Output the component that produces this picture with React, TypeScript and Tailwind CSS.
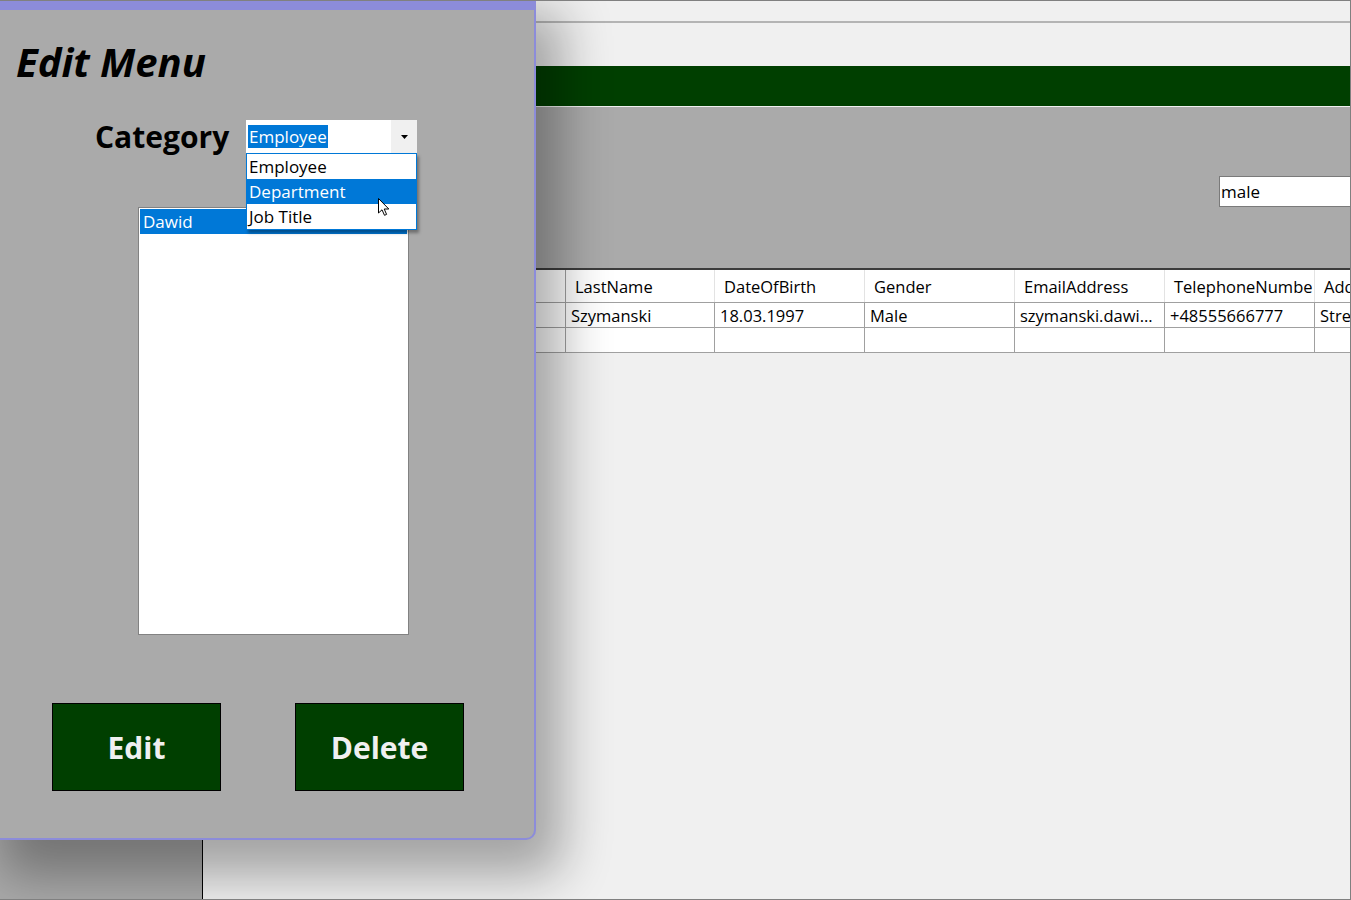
import React from 'react'

const columns = [
  { name: 'LastName', value: 'Szymanski', w: 'w-[149px]' },
  { name: 'DateOfBirth', value: '18.03.1997', w: 'w-[150px]' },
  { name: 'Gender', value: 'Male', w: 'w-[150px]' },
  { name: 'EmailAddress', value: 'szymanski.dawi...', w: 'w-[150px]' },
  { name: 'TelephoneNumbe', value: '+48555666777', w: 'w-[150px]' },
  { name: 'Address', value: 'Street 12', w: 'w-[150px]' },
]

const options = ['Employee', 'Department', 'Job Title']

function Cursor() {
  return (
    <svg width="13" height="20" viewBox="0 0 13 20" className="absolute left-[130px] top-[43px]">
      <path d="M1.5 1.5 L1.5 16 L5 12.8 L7.5 18.3 L9.6 17.4 L7.2 12 L11.8 12 Z" fill="#fff" stroke="#000" strokeWidth="1" strokeLinejoin="miter" />
    </svg>
  )
}

function DataGrid() {
  return (
    <div className="flex flex-col text-[16.5px] text-black">
      <div className="flex h-[33px] bg-white border-b border-[#a0a0a0]">
        <div className="w-[213px] shrink-0 border-r border-[#a0a0a0]" />
        <div className="w-[150px] shrink-0 border-r border-[#a0a0a0] pl-[9px] flex items-center pt-[3px]">FirstName</div>
        {columns.map((c) => (
          <div key={c.name} className={`${c.w} shrink-0 border-r border-[#e3e3e3] pl-[9px] flex items-center pt-[3px] whitespace-nowrap`}>
            {c.name}
          </div>
        ))}
      </div>
      <div className="flex h-[25px] bg-white border-b border-[#a0a0a0]">
        <div className="w-[213px] shrink-0 border-r border-[#a0a0a0] bg-[#f0f0f0]" />
        <div className="w-[150px] shrink-0 border-r border-[#a0a0a0] pl-[5px] flex items-center pt-[2px]">Dawid</div>
        {columns.map((c) => (
          <div key={c.name} className={`${c.w} shrink-0 border-r border-[#a0a0a0] pl-[5px] flex items-center pt-[2px] whitespace-nowrap overflow-hidden`}>
            {c.value}
          </div>
        ))}
      </div>
      <div className="flex h-[25px] bg-white border-b border-[#a0a0a0]">
        <div className="w-[213px] shrink-0 border-r border-[#a0a0a0] bg-[#f0f0f0]" />
        <div className="w-[150px] shrink-0 border-r border-[#a0a0a0]" />
        {columns.map((c) => (
          <div key={c.name} className={`${c.w} shrink-0 border-r border-[#a0a0a0]`} />
        ))}
      </div>
    </div>
  )
}

function EditMenu() {
  return (
    <div className="absolute left-0 top-0 w-[536px] h-[839px] bg-[#aaaaaa] border-t-[9px] border-r-2 border-b-2 border-[#8c8cda] rounded-br-[10px] shadow-[14px_24px_50px_12px_rgba(0,0,0,0.32)] flex flex-col">
      <h1 className="ml-[16px] mt-[28px] text-[40px] leading-[48px] font-bold italic text-black">Edit Menu</h1>

      <div className="mt-[34px] flex items-center h-[33px] pl-[95px]">
        <span className="w-[151px] shrink-0 text-[30px] leading-[33px] font-bold text-black">Category</span>
        <div className="relative w-[171px] h-[33px] bg-white flex items-center">
          <span className="ml-[2px] h-[23px] px-[1px] bg-[#0078d7] text-white text-[17px] leading-[23px]">Employee</span>
          <div className="ml-auto w-[26px] h-full bg-[#f0f0f0] flex items-center justify-center">
            <svg width="7" height="4" viewBox="0 0 7 4">
              <path d="M0 0 L7 0 L3.5 4 Z" fill="#000" />
            </svg>
          </div>
          <div className="absolute left-0 top-full w-[171px] h-[77px] bg-white border border-[#0078d7] shadow-[2px_3px_3px_rgba(0,0,0,0.35)] z-10">
            {options.map((o) => (
              <div
                key={o}
                className={
                  o === 'Department'
                    ? 'h-[25px] pl-[2px] flex items-center bg-[#0078d7] text-white text-[17px]'
                    : 'h-[25px] pl-[2px] flex items-center text-black text-[17px]'
                }
              >
                {o}
              </div>
            ))}
            <Cursor />
          </div>
        </div>
      </div>

      <div className="mt-[54px] ml-[138px] w-[271px] h-[428px] bg-white border border-[#828282] p-px">
        <div className="h-[25px] bg-[#0078d7] text-white text-[17px] pl-[3px] flex items-center">Dawid</div>
      </div>

      <div className="mt-[68px] pl-[52px] flex gap-[74px]">
        <button className="w-[169px] h-[88px] bg-[#003f00] border border-black text-[#f0f0f0] text-[30px] font-bold">Edit</button>
        <button className="w-[169px] h-[88px] bg-[#003f00] border border-black text-[#f0f0f0] text-[30px] font-bold">Delete</button>
      </div>
    </div>
  )
}

export default function App() {
  return (
    <div className="relative w-[1351px] h-[900px] overflow-hidden bg-[#f0f0f0] border-t border-r border-b border-[#808080] font-['Open_Sans',sans-serif]">
      <div className="flex h-full">
        <div className="w-[203px] shrink-0 bg-[#aaaaaa] border-r border-black" />
        <div className="flex-1 min-w-0 flex flex-col overflow-hidden">
          <div className="h-[22px] bg-[#f0f0f0] border-b-2 border-[#b4b4b4]" />
          <div className="h-[43px]" />
          <div className="h-[40px] bg-[#003f00]" />
          <div className="h-px bg-[#f0f0f0]" />
          <div className="h-[163px] bg-[#aaaaaa] border-b-2 border-[#3c3c3c] pl-[1016px] pt-[69px]">
            <div className="w-[200px] h-[31px] bg-white border border-[#7a7a7a] text-[17px] pl-px flex items-center text-black">male</div>
          </div>
          <DataGrid />
        </div>
      </div>
      <EditMenu />
    </div>
  )
}
